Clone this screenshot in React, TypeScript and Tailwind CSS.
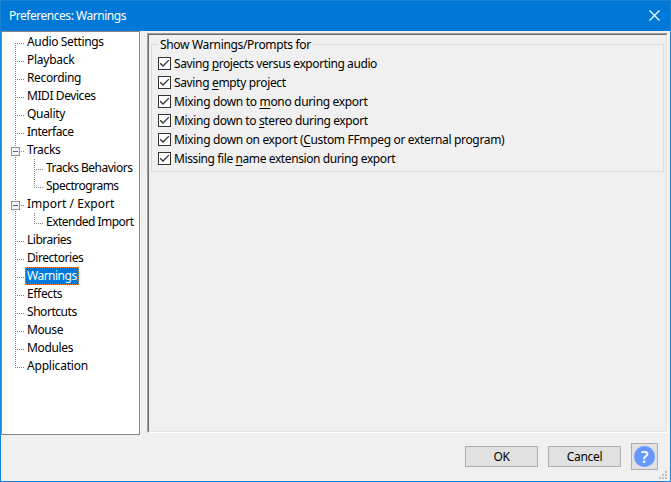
import type { ReactNode } from "react";

type Branch = {
  label: string;
  child?: boolean;
  open?: boolean;
  last?: boolean;
  selected?: boolean;
  tracking: string;
};

const branches: Branch[] = [
  { label: "Audio Settings", tracking: "tracking-[-0.35px]" },
  { label: "Playback", tracking: "tracking-[-0.25px]" },
  { label: "Recording", tracking: "tracking-[-0.35px]" },
  { label: "MIDI Devices", tracking: "tracking-[-0.42px]" },
  { label: "Quality", tracking: "tracking-[-0.3px]" },
  { label: "Interface", tracking: "tracking-[-0.5px]" },
  { label: "Tracks", open: true, tracking: "tracking-[-0.35px]" },
  { label: "Tracks Behaviors", child: true, tracking: "tracking-[-0.5px]" },
  { label: "Spectrograms", child: true, last: true, tracking: "tracking-[-0.5px]" },
  { label: "Import / Export", open: true, tracking: "tracking-[0.03px]" },
  { label: "Extended Import", child: true, last: true, tracking: "tracking-[-0.52px]" },
  { label: "Libraries", tracking: "tracking-[-0.5px]" },
  { label: "Directories", tracking: "tracking-[-0.45px]" },
  { label: "Warnings", selected: true, tracking: "tracking-[-0.5px]" },
  { label: "Effects", tracking: "tracking-[-0.35px]" },
  { label: "Shortcuts", tracking: "tracking-[-0.45px]" },
  { label: "Mouse", tracking: "tracking-[-0.4px]" },
  { label: "Modules", tracking: "tracking-[-0.35px]" },
  { label: "Application", last: true, tracking: "tracking-[-0.2px]" },
];

type Option = { before: string; key: string; after: string; tracking: string };

const options: Option[] = [
  { before: "Saving ", key: "p", after: "rojects versus exporting audio", tracking: "tracking-[-0.4px]" },
  { before: "Saving ", key: "e", after: "mpty project", tracking: "tracking-[-0.35px]" },
  { before: "Mixing down to ", key: "m", after: "ono during export", tracking: "tracking-[-0.33px]" },
  { before: "Mixing down to ", key: "s", after: "tereo during export", tracking: "tracking-[-0.37px]" },
  { before: "Mixing down on export (", key: "C", after: "ustom FFmpeg or external program)", tracking: "tracking-[-0.34px]" },
  { before: "Missing file ", key: "n", after: "ame extension during export", tracking: "tracking-[-0.4px]" },
];

function Connector({ item, first }: { item: Branch; first: boolean }) {
  const end = item.last && !item.child;
  return (
    <svg
      className={item.child ? "h-[18px] w-[42px] shrink-0" : "h-[18px] w-[23px] shrink-0"}
      shapeRendering="crispEdges"
      stroke="#808080"
      strokeDasharray="1 1"
      fill="none"
    >
      {!first && !end && <path d="M13.5 0V18" />}
      {first && <path d="M13.5 10V18" />}
      {end && <path d="M13.5 0V11" />}
      {item.child ? (
        <>
          <path d={item.last ? "M32.5 0V11" : "M32.5 0V18"} />
          <path d="M34 10.5H41" />
        </>
      ) : (
        <path d="M15 10.5H22" />
      )}
      {item.open && (
        <g strokeDasharray="none">
          <rect x="9.5" y="6.5" width="8" height="8" rx="1" fill="#f4f4f4" stroke="#919191" />
          <path d="M11 10.5H16" stroke="#4b63a7" />
        </g>
      )}
    </svg>
  );
}

function CheckRow({ option }: { option: Option }) {
  return (
    <label className="flex h-[19px] items-center gap-[3px]">
      <svg className="size-[13px] shrink-0" viewBox="0 0 13 13" fill="none">
        <rect x="0.5" y="0.5" width="12" height="12" fill="#fff" stroke="#333" />
        <path d="M2.2 6.2L5 9L10.9 3.1" stroke="#333" strokeWidth="1.3" />
      </svg>
      <span className={`whitespace-pre leading-[18px] ${option.tracking}`}>
        {option.before}
        <span className="underline decoration-1 underline-offset-[2px]">{option.key}</span>
        {option.after}
      </span>
    </label>
  );
}

function PushButton({ children }: { children: ReactNode }) {
  return (
    <button className="flex h-[21px] w-[73px] items-center justify-center border border-[#adadad] bg-[#e1e1e1] tracking-[-0.3px]">
      {children}
    </button>
  );
}

function SizeGrip() {
  return (
    <svg className="absolute right-[3px] bottom-[2px] size-2" viewBox="0 0 8 8" fill="#bfbfbf" shapeRendering="crispEdges">
      <path d="M6 0h2v2h-2zM3 3h2v2h-2zM6 3h2v2h-2zM0 6h2v2h-2zM3 6h2v2h-2zM6 6h2v2h-2z" />
    </svg>
  );
}

export default function App() {
  return (
    <div className="relative flex h-[482px] w-[671px] flex-col overflow-hidden border border-t-0 border-[#1883d7] bg-[#f0f0f0] font-['Noto_Sans','Open_Sans',sans-serif] text-[12px] leading-[18px] text-black">
      <header className="flex h-[31px] shrink-0 items-center justify-between border-t border-[#1883d7] bg-[#0078d7] pl-2 pr-[10px] text-white">
        <span className="whitespace-pre tracking-[-0.47px]">Preferences: Warnings</span>
        <svg className="mb-[2px] size-[11px]" viewBox="0 0 11 11" stroke="#fff" strokeWidth="1.1">
          <path d="M.5 .5L10.5 10.5M10.5 .5L.5 10.5" />
        </svg>
      </header>
      <main className="flex h-[404px] shrink-0">
        <nav className="h-[404px] w-[139px] shrink-0 border border-[#828790] bg-white pt-px">
          {branches.map((item, i) => (
            <div key={item.label} className="flex h-[18px]">
              <Connector item={item} first={i === 0} />
              <span
                className={`whitespace-pre px-[2px] leading-[18px] ${item.tracking} ${
                  item.selected ? "bg-[#0078d7] text-white outline-1 -outline-offset-1 outline-dotted outline-[#ff8728]" : ""
                }`}
              >
                {item.label}
              </span>
            </div>
          ))}
        </nav>
        <section className="ml-[7px] mt-[2px] h-[400px] w-[521px] border border-t-[#a0a0a0] border-r-white border-b-white border-l-[#a0a0a0]">
          <div className="h-full border border-t-[#696969] border-r-[#e3e3e3] border-b-[#e3e3e3] border-l-[#696969] px-[2px] pt-[9px]">
            <div className="h-[128px] w-[513px] border border-[#dcdcdc] pl-[6px]">
              <div className="-mt-[9px] flex h-[18px]">
                <span className="whitespace-pre bg-[#f0f0f0] px-[2px] tracking-[-0.33px]">Show Warnings/Prompts for</span>
              </div>
              {options.map((option) => (
                <CheckRow key={option.before + option.key} option={option} />
              ))}
            </div>
          </div>
        </section>
      </main>
      <footer className="flex grow items-center justify-end pr-[12px] pb-[3px]">
        <div className="mr-[10px]">
          <PushButton>OK</PushButton>
        </div>
        <PushButton>Cancel</PushButton>
        <button className="ml-[10px] flex size-[27px] items-center justify-center border border-[#adadad] bg-[#e1e1e1]">
          <span className="flex size-[21px] items-center justify-center rounded-full bg-[#6699ff] font-['Open_Sans','Noto_Sans',sans-serif] text-[17px] font-semibold text-white">
            ?
          </span>
        </button>
      </footer>
      <SizeGrip />
    </div>
  );
}
